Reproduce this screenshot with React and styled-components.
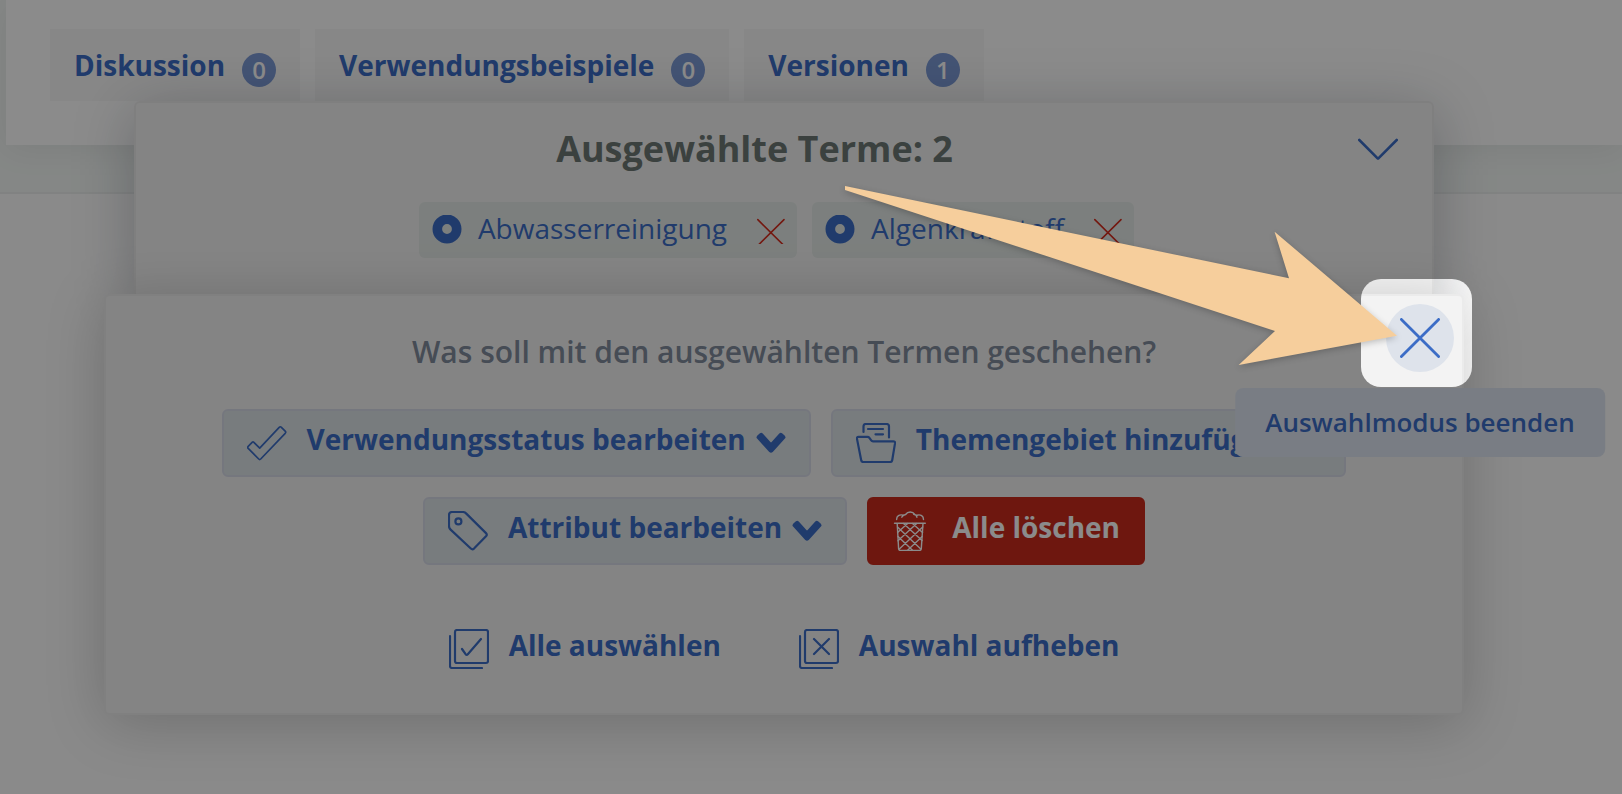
import React from "react";
import styled, { createGlobalStyle } from "styled-components";

const blue = "#3c6dc6";

const GlobalStyle = createGlobalStyle`
  *, *::before, *::after { box-sizing: border-box; }
  html, body { margin: 0; }
  body {
    background: #fff;
    font-family: "Open Sans", "Noto Sans", sans-serif;
    color: #6d7875;
  }
  button { font: inherit; cursor: pointer; }
  h2, p, ul { margin: 0; padding: 0; }
`;

const Page = styled.main`
  position: relative;
  min-height: 100vh;
  overflow: hidden;
  background: #fdfdfd;
`;

const Band = styled.header`
  padding: 0 0 47px 6px;
  background: #f4f8f6;
  border-bottom: 2px solid #ecefee;
`;

const Card = styled.div`
  padding: 29px 44px 44px;
  background: #fff;
  box-shadow: 0 4px 32px rgba(0, 0, 0, 0.07);
`;

const TabList = styled.nav`
  display: flex;
  gap: 15px;
`;

const Tab = styled.button`
  display: flex;
  align-items: center;
  gap: 17px;
  height: 72px;
  padding: 0 24px;
  border: 0;
  background: #f8f8f8;
  color: ${blue};
  font-size: 28px;
  font-weight: 700;
  line-height: 38px;
`;

const Badge = styled.span`
  width: 34px;
  height: 34px;
  margin-top: 10px;
  border-radius: 50%;
  background: #7c9ad6;
  color: #fff;
  font-size: 24px;
  font-weight: 600;
  line-height: 34px;
  text-align: center;
`;

const Overlay = styled.div`
  position: absolute;
  top: 101px;
  left: 104px;
  right: 158px;
`;

const TermsPanel = styled.section`
  margin: 0 30px;
  padding: 21px 0 36px;
  background: #f3f3f3;
  border: 2px solid #e9e9e9;
  border-bottom: 0;
  border-radius: 6px 6px 0 0;
  box-shadow: 0 10px 60px rgba(20, 28, 44, 0.26);
`;

const TermsHeader = styled.div`
  display: flex;
  align-items: center;
  padding: 0 34px 0 15px;
`;

const TermsTitle = styled.h2`
  flex: 1;
  font-size: 36px;
  font-weight: 700;
  line-height: 50px;
  text-align: center;
`;

const IconButton = styled.button`
  display: flex;
  padding: 0;
  border: 0;
  background: none;
  color: ${(p) => p.$color || blue};
`;

const ChipList = styled.ul`
  display: flex;
  justify-content: center;
  gap: 15px;
  margin-top: 28px;
  padding-right: 15px;
  list-style: none;
`;

const Chip = styled.li`
  display: flex;
  align-items: center;
  gap: 16px;
  height: 56px;
  padding: 0 12px 0 13px;
  border-radius: 6px;
  background: #e4eae7;
  color: ${blue};
`;

const ChipLabel = styled.span`
  padding: 0 14px 4px 0;
  font-size: 28px;
  line-height: 38px;
`;

const ActionPanel = styled.section`
  position: relative;
  display: flex;
  flex-direction: column;
  align-items: center;
  padding: 36px 100px 44px;
  background: #f3f3f3;
  border: 2px solid #ebebeb;
  border-radius: 6px;
  box-shadow: 0 8px 60px rgba(0, 0, 0, 0.2);
`;

const Question = styled.p`
  color: #808b9d;
  font-size: 30px;
  font-weight: 600;
  line-height: 40px;
`;

const ActionRow = styled.div`
  display: flex;
  flex-wrap: wrap;
  justify-content: center;
  gap: 20px;
  margin-top: 37px;
`;

const ActionButton = styled.button`
  display: flex;
  align-items: center;
  gap: 10px;
  height: 68px;
  padding: 0 23px;
  border: 2px solid ${(p) => (p.$danger ? "#ca2b1c" : "#d7dbe8")};
  border-radius: 6px;
  background: ${(p) => (p.$danger ? "#ca2b1c" : "#dde4e8")};
  color: ${(p) => (p.$danger ? "#fff" : blue)};
`;

const ActionLabel = styled.span`
  padding: 0 0 8px 10px;
  font-size: 28px;
  font-weight: 700;
  line-height: 38px;
`;

const LinkRow = styled.div`
  display: flex;
  justify-content: center;
  gap: 78px;
  margin-top: 64px;
`;

const LinkButton = styled.button`
  display: flex;
  align-items: center;
  gap: 10px;
  height: 40px;
  padding: 0;
  border: 0;
  background: none;
  color: ${blue};
`;

const CloseAnchor = styled.div`
  position: absolute;
  top: 8px;
  right: 8px;
`;

const CloseButton = styled.button`
  display: flex;
  align-items: center;
  justify-content: center;
  width: 68px;
  height: 68px;
  padding: 0;
  border: 0;
  border-radius: 50%;
  background: #dee3eb;
  color: ${blue};
`;

const Tooltip = styled.div`
  position: absolute;
  top: 84px;
  left: 50%;
  transform: translateX(-50%);
  padding: 17px 30px 18px;
  border-radius: 8px;
  background: #dfe6f2;
  color: ${blue};
  font-size: 26px;
  font-weight: 600;
  line-height: 34px;
  white-space: nowrap;
`;

const Spotlight = styled.div`
  position: absolute;
  top: -17px;
  right: -10px;
  width: 111px;
  height: 108px;
  border-radius: 20px;
  box-shadow: 0 0 0 4000px rgba(0, 0, 0, 0.455);
  pointer-events: none;
`;

const Arrow = styled.svg`
  position: absolute;
  top: -110px;
  right: 65px;
  overflow: visible;
  fill: #f6ce9c;
  filter: drop-shadow(0 2px 3px rgba(0, 0, 0, 0.22));
  pointer-events: none;
`;

const Icon = ({ size = 40, stroke = 2.2, children }) => (
  <svg
    width={size}
    height={size}
    viewBox={`0 0 ${size} ${size}`}
    fill="none"
    stroke="currentColor"
    strokeWidth={stroke}
    strokeLinecap="round"
    strokeLinejoin="round"
    aria-hidden="true"
  >
    {children}
  </svg>
);

const CheckIcon = () => (
  <Icon stroke={1.7}>
    <path d="M1.2 23.3 5.1 19.4Q6 18.5 6.9 19.4L12.7 25.2 32.2 4.4Q33.3 3.2 34.4 4.3L38.2 8.2Q39.2 9.2 38.2 10.3L13.7 36Q12.7 37 11.7 36L1.2 25.4Q.2 24.4 1.2 23.3Z" />
  </Icon>
);

const FolderIcon = () => (
  <Icon>
    <path d="M7.5 9V3.5Q7.5 1 10 1H30.5Q33 1 33 3.5V14.5M12 6H27M19.5 11.3H27" />
    <path d="M2.5 13.8H11.5Q12.7 13.8 13.4 14.8L15.2 17.4Q15.8 18.3 17 18.3H37.2Q39.3 18.3 39 20.4L36.2 37.3Q35.9 39 34.2 39H7.2Q5.5 39 5.2 37.3L1 15.9Q.6 13.8 2.5 13.8Z" />
  </Icon>
);

const TagIcon = () => (
  <Icon>
    <path d="M4 1H14.5Q16.7 1 18.3 2.6L38 22.1Q39.5 23.7 38 25.3L26 37.6Q24.4 39 22.8 37.5L2.6 18.6Q1 17.1 1 15V4Q1 1 4 1Z" />
    <circle cx="10.4" cy="10.4" r="3" />
  </Icon>
);

const TrashIcon = () => (
  <Icon stroke={1.4}>
    <path d="M2.5 12.3H33.3M5.2 12.5 6.6 37.6Q6.7 39.4 8.4 39.4H27.5Q29.2 39.4 29.3 37.6L31 12.5" />
    <path d="M4.6 8.6C4.6 5 7.3 3.2 11.4 4.2M9.8 6.2C10.5 5 12 3.8 13.6 3.5C15.8.2 20.6.2 22.8 3.5M21.7 3.3C23.4 3.5 24.8 4.6 24.9 6.2M25 4.2C28.7 3.2 31.5 5 31.5 8.6" />
    <path d="M11.5 12.5 30 29.5M20.5 12.5 30.5 21.5M5.5 16 28.5 37.8M6 25.5 20.5 39.2M24.7 12.5 6 29.8M15.6 12.5 5.6 21.5M30.7 16 7.6 37.8M30.2 25.5 15.6 39.2" />
  </Icon>
);

const SelectAllIcon = () => (
  <Icon>
    <rect x="6" y="1" width="33" height="33" rx="2" />
    <path d="M1 7V37Q1 39 3 39H33M13 20 16.6 25.2Q17.7 26.5 18.8 25.2L32 10" />
  </Icon>
);

const DeselectIcon = () => (
  <Icon>
    <rect x="6" y="1" width="33" height="33" rx="2" />
    <path d="M1 7V37Q1 39 3 39H33M15 10 30 25M30 10 15 25" />
  </Icon>
);

const ThickChevron = () => (
  <Icon size={30} stroke={2}>
    <path
      fill="currentColor"
      d="M1.8 8.6 4.6 6Q5.3 5.4 6 6.1L15 16.2 24 6.1Q24.7 5.4 25.4 6L28.2 8.6Q28.8 9.2 28.2 9.9L16 23.2Q15 24.2 14 23.2L1.8 9.9Q1.2 9.2 1.8 8.6Z"
    />
  </Icon>
);

const ThinChevron = () => (
  <Icon stroke={2.6}>
    <path d="M1.3 11 19.6 29.3Q20 29.7 20.4 29.3L38.7 11" />
  </Icon>
);

const CloseIcon = () => (
  <Icon stroke={2.8}>
    <path d="M1.4 1.4 38.6 38.6M38.6 1.4 1.4 38.6" />
  </Icon>
);

const RemoveIcon = () => (
  <Icon size={28} stroke={1.6}>
    <path d="M.8 3.6 27 29.6M27 3.6.8 29.6" />
  </Icon>
);

const DotIcon = () => (
  <svg width="30" height="30" viewBox="0 0 30 30" aria-hidden="true">
    <circle cx="15" cy="14" r="9.7" fill="none" stroke="currentColor" strokeWidth="9.6" />
  </svg>
);

const tabs = [
  { label: "Diskussion", count: 0 },
  { label: "Verwendungsbeispiele", count: 0 },
  { label: "Versionen", count: 1 },
];

const terms = ["Abwasserreinigung", "Algenkraftstoff"];

const actions = [
  { label: "Verwendungsstatus bearbeiten", icon: <CheckIcon />, menu: true },
  { label: "Themengebiet hinzufügen", icon: <FolderIcon />, menu: true },
  { label: "Attribut bearbeiten", icon: <TagIcon />, menu: true },
  { label: "Alle löschen", icon: <TrashIcon />, danger: true },
];

const links = [
  { label: "Alle auswählen", icon: <SelectAllIcon /> },
  { label: "Auswahl aufheben", icon: <DeselectIcon /> },
];

export default function App() {
  return (
    <Page>
      <GlobalStyle />
      <Band>
        <Card>
          <TabList>
            {tabs.map((t) => (
              <Tab key={t.label} type="button">
                {t.label}
                <Badge>{t.count}</Badge>
              </Tab>
            ))}
          </TabList>
        </Card>
      </Band>

      <Overlay>
        <TermsPanel>
          <TermsHeader>
            <TermsTitle>Ausgewählte Terme: 2</TermsTitle>
            <IconButton type="button" aria-label="Einklappen">
              <ThinChevron />
            </IconButton>
          </TermsHeader>
          <ChipList>
            {terms.map((term) => (
              <Chip key={term}>
                <DotIcon />
                <ChipLabel>{term}</ChipLabel>
                <IconButton type="button" $color="#d42c1e" aria-label={`${term} entfernen`}>
                  <RemoveIcon />
                </IconButton>
              </Chip>
            ))}
          </ChipList>
        </TermsPanel>

        <ActionPanel>
          <Question>Was soll mit den ausgewählten Termen geschehen?</Question>
          <ActionRow>
            {actions.map((a) => (
              <ActionButton key={a.label} type="button" $danger={a.danger}>
                {a.icon}
                <ActionLabel>{a.label}</ActionLabel>
                {a.menu && <ThickChevron />}
              </ActionButton>
            ))}
          </ActionRow>
          <LinkRow>
            {links.map((l) => (
              <LinkButton key={l.label} type="button">
                {l.icon}
                <ActionLabel>{l.label}</ActionLabel>
              </LinkButton>
            ))}
          </LinkRow>
          <CloseAnchor>
            <CloseButton type="button" aria-label="Auswahlmodus beenden">
              <CloseIcon />
            </CloseButton>
            <Tooltip role="tooltip">Auswahlmodus beenden</Tooltip>
          </CloseAnchor>
          <Spotlight />
          <Arrow width="552" height="179" viewBox="0 0 552 179" aria-hidden="true">
            <path d="M0 0 444 92.3 429.6 45.7 552 149.7 393.7 179 430 145 0 4Z" />
          </Arrow>
        </ActionPanel>
      </Overlay>
    </Page>
  );
}
